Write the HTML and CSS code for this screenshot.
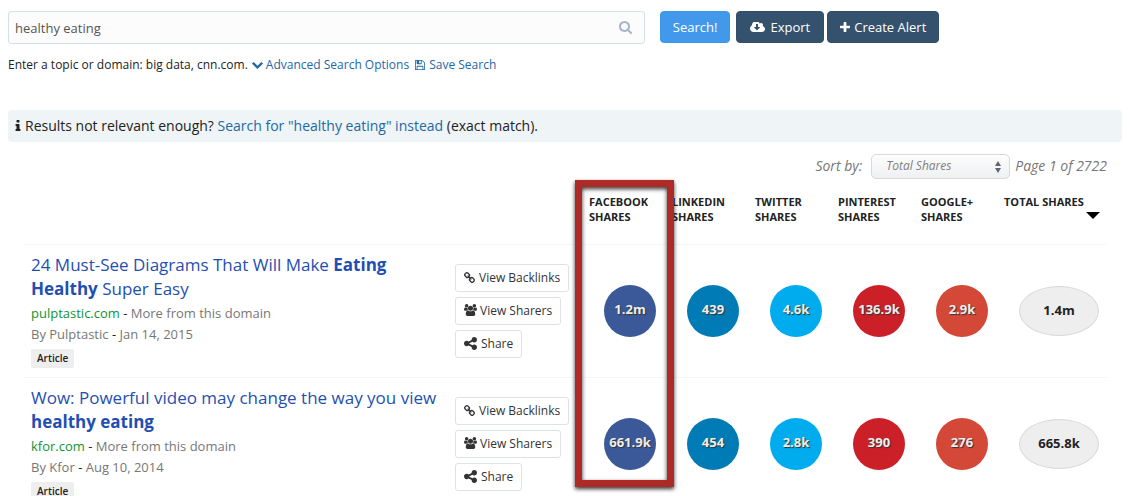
FILE: index.html
```html
<!DOCTYPE html>
<html lang="en">
<head>
    <meta charset="UTF-8">
    <meta name="viewport" content="width=device-width, initial-scale=1.0">
    <title>healthy eating - Most Shared</title>
    <link rel="stylesheet" href="styles.css">
</head>
<body>
    <!-- icon sprite -->
    <svg class="sprite" aria-hidden="true">
        <symbol id="i-search" viewBox="64 128 1664 1664"><path d="M1216 832q0-185-131.500-316.500t-316.500-131.500-316.500 131.500-131.500 316.500 131.500 316.500 316.500 131.500 316.500-131.500 131.500-316.500zm512 832q0 52-38 90t-90 38q-54 0-90-38l-343-342q-179 124-399 124-143 0-273.500-55.500t-225-150-150-225-55.500-273.500 55.500-273.500 150-225 225-150 273.500-55.500 273.500 55.500 225 150 150 225 55.500 273.500q0 220-124 399l343 343q37 37 37 90z"/></symbol>
        <symbol id="i-download" viewBox="-64 256 1920 1280"><path d="M1216 928q0-14-9-23t-23-9h-224v-352q0-13-9.500-22.500t-22.500-9.500h-192q-13 0-22.500 9.500t-9.500 22.500v352h-224q-13 0-22.500 9.500t-9.500 22.500q0 14 9 23l352 352q9 9 23 9t23-9l351-351q10-12 10-24zm640 224q0 159-112.500 271.500t-271.500 112.500h-1088q-185 0-316.500-131.500t-131.500-316.500q0-130 70-240t188-165q-2-30-2-43 0-212 150-362t362-150q156 0 285.500 87t188.500 231q71-62 166-62 106 0 181 75t75 181q0 76-41 138 130 31 213.500 135.500t83.500 238.500z"/></symbol>
        <symbol id="i-plus" viewBox="192 128 1408 1408"><path d="M1600 736v192q0 40-28 68t-68 28h-416v416q0 40-28 68t-68 28h-192q-40 0-68-28t-28-68v-416h-416q-40 0-68-28t-28-68v-192q0-40 28-68t68-28h416v-416q0-40 28-68t68-28h192q40 0 68 28t28 68v416h416q40 0 68 28t28 68z"/></symbol>
        <symbol id="i-chevron" viewBox="90 532 1612 1036"><path d="M1683 808l-742 741q-19 19-45 19t-45-19l-742-741q-19-19-19-45.500t19-45.500l166-165q19-19 45-19t45 19l531 531 531-531q19-19 45-19t45 19l166 165q19 19 19 45.500t-19 45.500z"/></symbol>
        <symbol id="i-save" viewBox="128 128 1536 1536"><path d="M512 1536h768v-384h-768v384zm896 0h128v-896q0-14-10-38.500t-20-34.500l-281-281q-10-10-34-20t-39-10v416q0 40-28 68t-68 28h-576q-40 0-68-28t-28-68v-416h-128v1280h128v-416q0-40 28-68t68-28h832q40 0 68 28t28 68v416zm-384-928v-320q0-13-9.500-22.500t-22.500-9.500h-192q-13 0-22.500 9.500t-9.500 22.500v320q0 13 9.500 22.500t22.500 9.500h192q13 0 22.500-9.500t9.500-22.500zm640 32v928q0 40-28 68t-68 28h-1344q-40 0-68-28t-28-68v-1344q0-40 28-68t68-28h928q40 0 88 20t76 48l280 280q28 28 48 76t20 88z"/></symbol>
        <symbol id="i-info" viewBox="576 128 640 1408"><path d="M1216 1344v128q0 26-19 45t-45 19h-512q-26 0-45-19t-19-45v-128q0-26 19-45t45-19h64v-384h-64q-26 0-45-19t-19-45v-128q0-26 19-45t45-19h384q26 0 45 19t19 45v576h64q26 0 45 19t19 45zm-128-1152v192q0 26-19 45t-45 19h-256q-26 0-45-19t-19-45v-192q0-26 19-45t45-19h256q26 0 45 19t19 45z"/></symbol>
        <symbol id="i-link" viewBox="80 16 1632 1632"><path d="M1520 1216q0-40-28-68l-208-208q-28-28-68-28-42 0-72 32 3 3 19 18.500t21.500 21.500 15 19 13 25.500 3.500 27.500q0 40-28 68t-68 28q-15 0-27.500-3.500t-25.500-13-19-15-21.500-21.500-18.500-19q-33 31-33 73 0 40 28 68l206 207q27 27 68 27 40 0 68-26l147-146q28-28 28-67zm-703-705q0-40-28-68l-206-207q-28-28-68-28-39 0-68 27l-147 146q-28 28-28 67 0 40 28 68l208 208q27 27 68 27 42 0 72-31-3-3-19-18.500t-21.500-21.500-15-19-13-25.500-3.500-27.500q0-40 28-68t68-28q15 0 27.500 3.500t25.500 13 19 15 21.500 21.500 18.500 19q33-31 33-73zm895 705q0 120-85 203l-147 146q-83 83-203 83-121 0-204-85l-206-207q-83-83-83-203 0-123 88-209l-88-88q-86 88-208 88-120 0-204-84l-208-208q-84-84-84-204t85-203l147-146q83-83 203-83 121 0 204 85l206 207q83 83 83 203 0 123-88 209l88 88q86-88 208-88 120 0 204 84l208 208q84 84 84 204z"/></symbol>
        <symbol id="i-users" viewBox="-64 0 1920 1792"><path d="M529 896q-162 5-265 128h-134q-82 0-138-40.500t-56-118.500q0-353 124-353 6 0 43.500 21t97.500 42.500 119 21.500q67 0 133-23-5 37-5 66 0 139 81 256zm1071 637q0 120-73 189.500t-194 69.500h-874q-121 0-194-69.500t-73-189.500q0-53 3.500-103.500t14-109 26.500-108.500 43-97.500 62-81 85.500-53.500 111.500-20q10 0 43 21.500t73 48 107 48 135 21.500 135-21.500 107-48 73-48 43-21.500q61 0 111.500 20t85.500 53.500 62 81 43 97.500 26.500 108.500 14 109 3.500 103.500zm-1024-1277q0 106-75 181t-181 75-181-75-75-181 75-181 181-75 181 75 75 181zm704 384q0 159-112.500 271.500t-271.500 112.500-271.500-112.500-112.500-271.500 112.500-271.500 271.500-112.500 271.500 112.500 112.500 271.500zm576 225q0 78-56 118.500t-138 40.500h-134q-103-123-265-128 81-117 81-256 0-29-5-66 66 23 133 23 59 0 119-21.500t97.500-42.500 43.500-21q124 0 124 353zm-128-609q0 106-75 181t-181 75-181-75-75-181 75-181 181-75 181 75 75 181z"/></symbol>
        <symbol id="i-share" viewBox="128 128 1536 1536"><path d="M1344 1024q133 0 226.500 93.500t93.500 226.500-93.500 226.500-226.500 93.500-226.500-93.500-93.500-226.500q0-12 2-34l-360-180q-92 86-218 86-133 0-226.500-93.500t-93.500-226.500 93.500-226.500 226.500-93.500q126 0 218 86l360-180q-2-22-2-34 0-133 93.500-226.500t226.500-93.500 226.500 93.500 93.500 226.500-93.500 226.500-226.500 93.500q-126 0-218-86l-360 180q2 22 2 34t-2 34l360 180q92-86 218-86z"/></symbol>
    </svg>

    <form class="search-form" onsubmit="return false">
        <div class="search-box">
            <input type="text" id="topic" name="topic" value="healthy eating" aria-label="Topic or domain">
            <svg class="search-icon"><use href="#i-search"/></svg>
        </div>
        <button type="submit" class="btn btn-search">Search!</button>
        <button type="button" class="btn"><svg class="icon-download"><use href="#i-download"/></svg>Export</button>
        <button type="button" class="btn btn-alert"><svg class="icon-plus"><use href="#i-plus"/></svg>Create Alert</button>
    </form>

    <div class="hint">
        <label for="topic">Enter a topic or domain: big data, cnn.com.</label>
        <a href="#"><svg class="icon-chevron"><use href="#i-chevron"/></svg>Advanced Search Options</a>
        <a href="#"><svg class="icon-save"><use href="#i-save"/></svg>Save Search</a>
    </div>

    <div class="notice">
        <svg class="icon-info"><use href="#i-info"/></svg>
        <p>Results not relevant enough? <a href="#">Search for "healthy eating" instead</a> (exact match).</p>
    </div>

    <div class="results">
        <div class="sort-bar">
            <label for="sort">Sort by:</label>
            <div class="select-box">
                <select id="sort" name="sort">
                    <option>Total Shares</option>
                    <option>Facebook Shares</option>
                    <option>Twitter Shares</option>
                </select>
                <svg class="select-arrows" viewBox="0 0 6 12"><path d="M0 5l3-5 3 5zM0 7h6l-3 5z"/></svg>
            </div>
            <span>Page 1 of 2722</span>
        </div>

        <table>
            <thead>
                <tr>
                    <th class="col-title"></th>
                    <th class="col-actions"></th>
                    <th class="col-share highlighted">Facebook Shares<div class="highlight"></div></th>
                    <th class="col-share">LinkedIn Shares</th>
                    <th class="col-share">Twitter Shares</th>
                    <th class="col-share">Pinterest Shares</th>
                    <th class="col-share">Google+ Shares</th>
                    <th class="col-total">Total Shares<div class="sort-arrow"></div></th>
                </tr>
            </thead>
            <tbody>
                <tr>
                    <td class="article">
                        <h2><a href="#">24 Must-See Diagrams That Will Make <b>Eating</b> <b>Healthy</b> Super Easy</a></h2>
                        <p><a href="#" class="domain">pulptastic.com</a> - <a href="#" class="more">More from this domain</a></p>
                        <p><a href="#" class="more">By Pulptastic</a> - <span class="more">Jan 14, 2015</span></p>
                        <span class="tag">Article</span>
                    </td>
                    <td>
                        <div class="actions">
                            <button type="button"><svg class="icon-link"><use href="#i-link"/></svg>View Backlinks</button>
                            <button type="button"><svg class="icon-users"><use href="#i-users"/></svg>View Sharers</button>
                            <button type="button"><svg class="icon-share"><use href="#i-share"/></svg>Share</button>
                        </div>
                    </td>
                    <td><div class="count facebook">1.2m</div></td>
                    <td><div class="count linkedin">439</div></td>
                    <td><div class="count twitter">4.6k</div></td>
                    <td><div class="count pinterest">136.9k</div></td>
                    <td><div class="count google">2.9k</div></td>
                    <td><div class="total">1.4m</div></td>
                </tr>
                <tr>
                    <td class="article">
                        <h2><a href="#">Wow: Powerful video may change the way you view <b>healthy eating</b></a></h2>
                        <p><a href="#" class="domain">kfor.com</a> - <a href="#" class="more">More from this domain</a></p>
                        <p><a href="#" class="more">By Kfor</a> - <span class="more">Aug 10, 2014</span></p>
                        <span class="tag">Article</span>
                    </td>
                    <td>
                        <div class="actions">
                            <button type="button"><svg class="icon-link"><use href="#i-link"/></svg>View Backlinks</button>
                            <button type="button"><svg class="icon-users"><use href="#i-users"/></svg>View Sharers</button>
                            <button type="button"><svg class="icon-share"><use href="#i-share"/></svg>Share</button>
                        </div>
                    </td>
                    <td><div class="count facebook">661.9k</div></td>
                    <td><div class="count linkedin">454</div></td>
                    <td><div class="count twitter">2.8k</div></td>
                    <td><div class="count pinterest">390</div></td>
                    <td><div class="count google">276</div></td>
                    <td><div class="total">665.8k</div></td>
                </tr>
            </tbody>
        </table>
    </div>
</body>
</html>
```

FILE: styles.css
```css
* {
    box-sizing: border-box;
}
body {
    height: 100vh;
    margin: 0;
    padding: 11px 8px 0;
    overflow: hidden;
    background-color: #fff;
    color: #222;
    font-family: "Open Sans", "Noto Sans", sans-serif;
    font-size: 13px;
}
a {
    color: #2269a6;
    text-decoration: none;
}
p, h2 {
    margin: 0;
}
button, input, select {
    font-family: inherit;
}
svg {
    fill: currentColor;
    flex: none;
}
.sprite {
    display: none;
}

/* search */
.search-form {
    display: flex;
    align-items: flex-start;
}
.search-box {
    position: relative;
    width: calc(58.3333% - 13px);
    margin-right: 15px;
}
.search-box input {
    display: block;
    width: 100%;
    height: 33px;
    padding: 0 40px 0 6px;
    border: 1px solid #d5dfe8;
    border-radius: 3px;
    background-color: #fcfcfc;
    color: #555;
    font-size: 13px;
}
.search-icon {
    position: absolute;
    top: 10px;
    right: 13px;
    width: 13px;
    height: 13px;
    color: #a6b4c6;
}
.btn {
    display: flex;
    align-items: center;
    justify-content: center;
    height: 32px;
    margin-left: 3px;
    padding: 0 13px;
    border: 1px solid #314f6b;
    border-radius: 4px;
    background-color: #34526e;
    color: #fff;
    font-size: 13px;
}
.btn-search {
    margin-left: 0;
    margin-right: 3px;
    padding: 0 12px;
    border-color: #3c96e6;
    background-color: #4299eb;
}
.btn-alert {
    padding: 0 12px;
}
.icon-download {
    width: 15px;
    height: 10px;
    margin-right: 5px;
}
.icon-plus {
    width: 10px;
    height: 10px;
    margin-right: 4px;
}
.hint {
    display: flex;
    align-items: center;
    margin-top: 12px;
    font-size: 12px;
    line-height: 18px;
}
.hint a {
    display: flex;
    align-items: center;
    margin-right: 6px;
}
.hint label {
    margin-right: 4px;
}
.icon-chevron {
    width: 11px;
    height: 7px;
    margin-right: 3px;
}
.icon-save {
    width: 10px;
    height: 10px;
    margin-right: 4px;
}
.notice {
    display: flex;
    align-items: center;
    height: 32px;
    margin-top: 36px;
    padding: 0 7px 1px;
    border-radius: 4px;
    background-color: #eff4f7;
    font-size: 14px;
}
.icon-info {
    width: 6px;
    height: 11px;
    margin-right: 4px;
}

/* results */
.results {
    padding: 0 15px 0 16px;
}
.sort-bar {
    display: flex;
    align-items: flex-start;
    justify-content: flex-end;
    gap: 5px;
    margin: 12px 0 8px;
    color: #777;
    font-size: 14px;
    font-style: italic;
    line-height: 23px;
}
.sort-bar label {
    margin-right: 4px;
}
.select-box {
    position: relative;
}
.select-box select {
    display: block;
    width: 139px;
    height: 25px;
    padding: 0 24px 2px 14px;
    border: 1px solid #d9d9d9;
    border-radius: 5px;
    background: linear-gradient(#fdfdfd, #eef0f2);
    color: #808080;
    font-size: 12px;
    font-style: italic;
    appearance: none;
}
.select-arrows {
    position: absolute;
    top: 7px;
    right: 9px;
    width: 6px;
    height: 12px;
    color: #5f6670;
}
table {
    width: 100%;
    table-layout: fixed;
    border-collapse: separate;
    border-spacing: 0;
}
th {
    height: 57px;
    padding: 7px;
    font-size: 11px;
    line-height: 15px;
    text-align: left;
    text-transform: uppercase;
    vertical-align: top;
}
td {
    height: 133px;
    padding: 0 7px;
    border-top: 1px solid #f5f5f5;
    vertical-align: middle;
}
.col-actions {
    width: 134px;
}
.col-share {
    width: 83px;
}
.col-total {
    width: 110px;
}
.highlighted {
    position: relative;
}
/* frame round the facebook column */
.highlight {
    position: absolute;
    top: -7px;
    left: -7px;
    width: 99px;
    height: 307px;
    border: 7px solid #ae2a26;
    box-shadow: 0 2px 4px rgba(0, 0, 0, 0.8), inset 0 2px 4px rgba(0, 0, 0, 0.8);
    z-index: 1;
}
.sort-arrow {
    width: 0;
    margin: 3px 0 0 auto;
    border: 7px solid transparent;
    border-top-color: #000;
    border-bottom: 0;
}
.article {
    padding-top: 8px;
    vertical-align: top;
}
.article h2 {
    margin-bottom: 2px;
    font-size: 17px;
    font-weight: normal;
    line-height: 24px;
}
.article h2 a {
    color: #1f4fb2;
}
.article p {
    line-height: 21px;
}
.article .domain {
    color: #0f9336;
}
.article .more {
    color: #777;
}
.tag {
    display: block;
    width: fit-content;
    margin-top: 4px;
    padding: 0 6px;
    border-radius: 2px;
    background-color: #eee;
    font-size: 10px;
    font-weight: 600;
    line-height: 19px;
}
.actions {
    display: flex;
    flex-direction: column;
    align-items: flex-start;
    gap: 5px;
}
.actions button {
    display: flex;
    align-items: center;
    height: 28px;
    padding: 0 8px 2px;
    border: 1px solid #dfe1e8;
    border-radius: 3px;
    background-color: #fff;
    color: #333;
    font-size: 12px;
}
.icon-link {
    width: 11px;
    height: 11px;
    margin-right: 4px;
}
.icon-users {
    width: 13px;
    height: 12px;
    margin-right: 3px;
}
.icon-share {
    width: 13px;
    height: 13px;
    margin-right: 4px;
}
.count {
    width: 52px;
    height: 52px;
    margin-left: 15px;
    border-radius: 50%;
    color: #eee;
    font-size: 13px;
    font-weight: bold;
    line-height: 48px;
    text-align: center;
    text-shadow: 1px 1px 1px #333;
}
.facebook {
    background-color: #3b5998;
}
.linkedin {
    background-color: #007bb6;
}
.twitter {
    background-color: #00aced;
}
.pinterest {
    background-color: #cb2027;
}
.google {
    background-color: #d34836;
}
.total {
    width: 80px;
    height: 50px;
    margin-left: 15px;
    border: 1px solid #d8d8d8;
    border-radius: 50%;
    background-color: #eee;
    font-size: 13px;
    font-weight: bold;
    line-height: 46px;
    text-align: center;
}
```
